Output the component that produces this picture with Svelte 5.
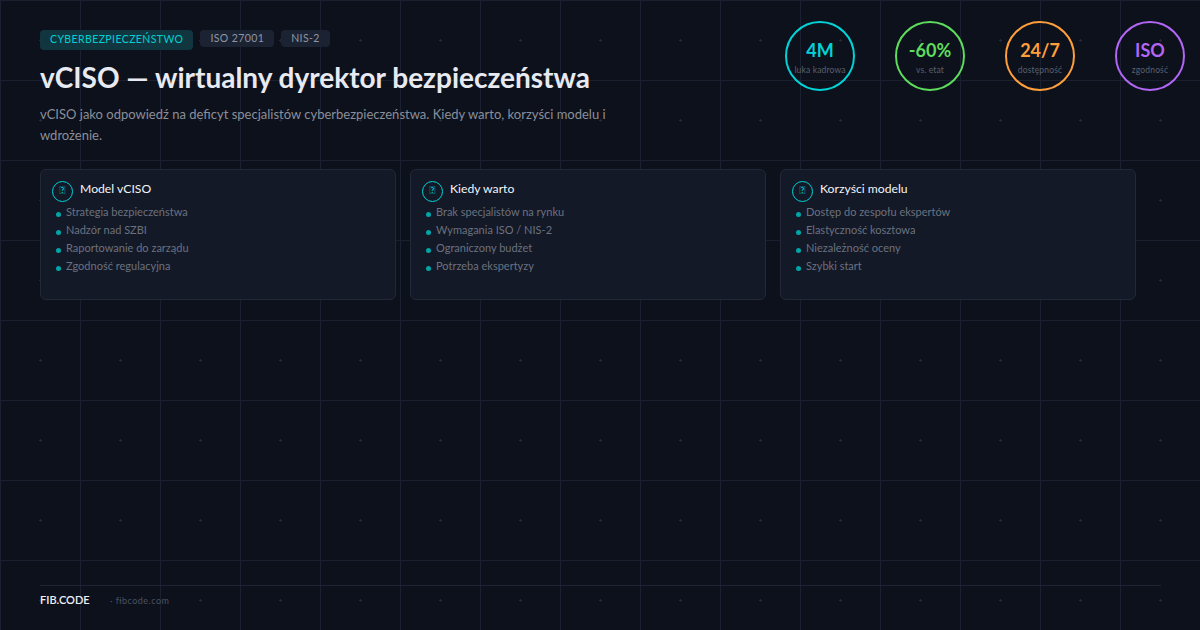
<script>
  const tags = [
    { label: 'CYBERBEZPIECZEŃSTWO', main: true },
    { label: 'ISO 27001' },
    { label: 'NIS-2' }
  ];

  const stats = [
    { value: '4M', label: 'luka kadrowa', color: '#00d4d8' },
    { value: '-60%', label: 'vs. etat', color: '#5ddc5d' },
    { value: '24/7', label: 'dostępność', color: '#ff9f3c' },
    { value: 'ISO', label: 'zgodność', color: '#b266f5' }
  ];

  // the icon glyph has no font here, it shows as the fallback box
  const cards = [
    {
      title: 'Model vCISO',
      icon: '\uE000',
      items: ['Strategia bezpieczeństwa', 'Nadzór nad SZBI', 'Raportowanie do zarządu', 'Zgodność regulacyjna']
    },
    {
      title: 'Kiedy warto',
      icon: '\uE000',
      items: ['Brak specjalistów na rynku', 'Wymagania ISO / NIS-2', 'Ograniczony budżet', 'Potrzeba ekspertyzy']
    },
    {
      title: 'Korzyści modelu',
      icon: '\uE000',
      items: ['Dostęp do zespołu ekspertów', 'Elastyczność kosztowa', 'Niezależność oceny', 'Szybki start']
    }
  ];
</script>

<div class="page">
  <!-- backdrop: 80px grid with a small plus in the middle of each tile -->
  <svg class="backdrop" width="1200" height="630" aria-hidden="true">
    <defs>
      <pattern id="tile" width="80" height="80" patternUnits="userSpaceOnUse">
        <path d="M0 .5H80M.5 0V80" stroke="#1a2030" fill="none" />
        <path d="M39 40.5H42M40.5 39V42" stroke="#232938" fill="none" />
      </pattern>
    </defs>
    <rect width="1200" height="630" fill="url(#tile)" />
  </svg>

  <header class="head">
    <div class="intro">
      <div class="tags">
        {#each tags as tag}
          <span class="tag" class:main={tag.main}>{tag.label}</span>
        {/each}
      </div>
      <h1>vCISO — wirtualny dyrektor bezpieczeństwa</h1>
      <p>vCISO jako odpowiedź na deficyt specjalistów cyberbezpieczeństwa. Kiedy warto, korzyści modelu i wdrożenie.</p>
    </div>

    <div class="stats">
      {#each stats as stat}
        <div class="stat" style="--c: {stat.color}">
          <span class="value">{stat.value}</span>
          <span class="label">{stat.label}</span>
        </div>
      {/each}
    </div>
  </header>

  <section class="cards">
    {#each cards as card}
      <article class="card">
        <div class="card-head">
          <span class="icon">{card.icon}</span>
          <h2>{card.title}</h2>
        </div>
        <ul>
          {#each card.items as item}
            <li>{item}</li>
          {/each}
        </ul>
      </article>
    {/each}
  </section>

  <footer class="foot">
    <span class="brand">FIB.CODE</span>
    <span class="site">· fibcode.com</span>
  </footer>
</div>

<style>
  :global(body) {
    margin: 0;
    background: #0d111b;
  }

  .page {
    position: relative;
    box-sizing: border-box;
    width: 1200px;
    height: 630px;
    overflow: hidden;
    display: flex;
    flex-direction: column;
    padding: 30px 40px 0;
    font-family: Lato, 'Liberation Sans', sans-serif;
    background-color: #0d111b;
  }

  .backdrop {
    position: absolute;
    top: 0;
    left: 0;
  }

  .head,
  .cards,
  .foot {
    position: relative;
  }

  .head {
    display: flex;
    justify-content: space-between;
    align-items: flex-start;
    margin-right: -25px;
  }

  .intro {
    width: 590px;
  }

  .tags {
    display: flex;
    align-items: flex-start;
    gap: 7px;
  }

  .tag {
    padding: 2px 10px;
    border-radius: 4px;
    background: #1b2333;
    color: #8f95a3;
    font-size: 10.5px;
    line-height: 13px;
    letter-spacing: 0.4px;
  }

  .tag.main {
    padding: 3px 10px 4px;
    background: #12363f;
    color: #00cfd5;
  }

  h1 {
    margin: 8px 0 0;
    color: #e8eaf2;
    font-size: 28px;
    line-height: 38px;
    font-weight: 700;
    white-space: nowrap;
  }

  p {
    margin: 8px 0 0;
    color: #8a8f9c;
    font-size: 13px;
    line-height: 21px;
  }

  .stats {
    display: flex;
    gap: 40px;
    margin-top: -9px;
  }

  .stat {
    box-sizing: border-box;
    width: 70px;
    height: 70px;
    border: 2px solid var(--c);
    border-radius: 50%;
    display: flex;
    flex-direction: column;
    align-items: center;
    justify-content: center;
  }

  .value {
    color: var(--c);
    font-size: 18px;
    line-height: 24px;
    font-weight: 700;
    white-space: nowrap;
    margin-top: 1px;
  }

  .label {
    margin-top: 2px;
    color: #5a6070;
    font-size: 8.5px;
    line-height: 12px;
    letter-spacing: 0.15px;
    white-space: nowrap;
  }

  .cards {
    display: grid;
    grid-template-columns: repeat(3, 356px);
    gap: 14px;
    margin-top: 23px;
  }

  .card {
    box-sizing: border-box;
    height: 131px;
    padding: 11px;
    background: #131926;
    border: 1px solid #222838;
    border-radius: 6px;
  }

  .card-head {
    display: flex;
    align-items: flex-start;
    gap: 7px;
  }

  .icon {
    box-sizing: border-box;
    width: 21px;
    height: 21px;
    padding-bottom: 4px;
    border: 1px solid #00d4d8;
    border-radius: 50%;
    display: flex;
    align-items: center;
    justify-content: center;
    color: #00d4d8;
    font-size: 11px;
    line-height: 1;
  }

  h2 {
    margin: 0;
    color: #f2f4f8;
    font-size: 12.2px;
    line-height: 15px;
    font-weight: 400;
  }

  ul {
    list-style: none;
    margin: 1px 0 0;
    padding: 0 0 0 4px;
  }

  li {
    display: flex;
    align-items: center;
    gap: 5px;
    color: #6b7180;
    font-size: 11px;
    line-height: 18px;
  }

  li::before {
    content: '';
    width: 5px;
    height: 5px;
    margin-top: 4px;
    border-radius: 50%;
    background: #00a5a8;
  }

  .foot {
    margin-top: auto;
    margin-bottom: 22px;
    margin-right: -1px;
    padding-top: 6px;
    border-top: 1px solid #1e2433;
    display: flex;
    align-items: center;
  }

  .brand {
    color: #eef0f6;
    font-size: 11px;
    line-height: 14px;
    font-weight: 600;
    width: 70px;
  }

  .site {
    color: #4c5262;
    font-size: 9px;
    line-height: 14px;
    letter-spacing: 0.5px;
    margin-top: 2px;
  }
</style>
